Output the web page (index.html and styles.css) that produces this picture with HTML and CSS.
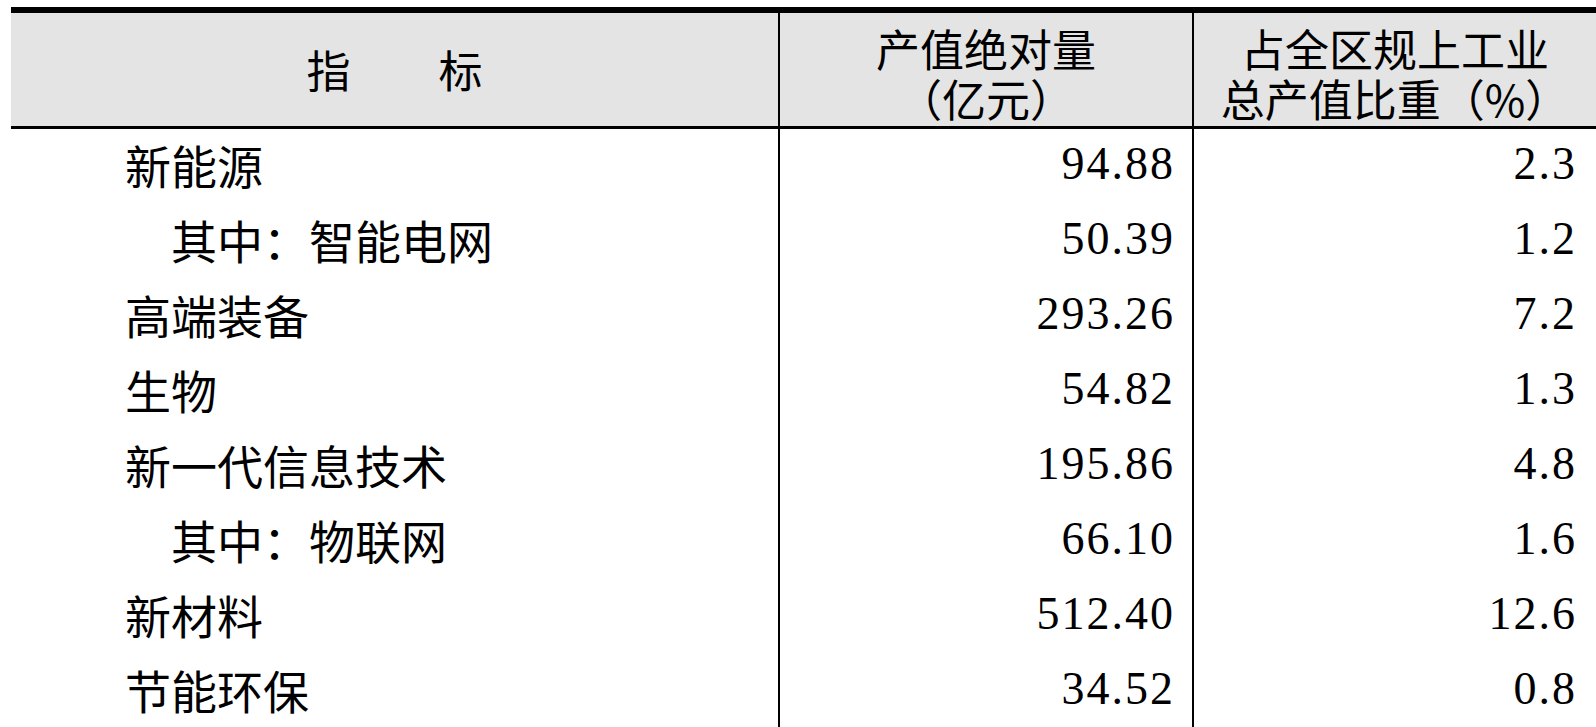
FILE: index.html
```html
<!DOCTYPE html>
<html lang="zh-CN">
<head>
<meta charset="utf-8">
<title>战略性新兴产业产值</title>
<link rel="stylesheet" href="styles.css">
</head>
<body>
<div class="sheet">
  <div class="row head">
    <div class="cell name-h"><span>指　　标</span></div>
    <div class="cell col-h"><span>产值绝对量</span><span>（亿元）</span></div>
    <div class="cell col-h"><span>占全区规上工业</span><span>总产值比重（%）</span></div>
  </div>
  <div class="row body">
    <div class="cell name">新能源</div>
    <div class="cell num">94.88</div>
    <div class="cell num">2.3</div>
  </div>
  <div class="row body">
    <div class="cell name sub">其中：智能电网</div>
    <div class="cell num">50.39</div>
    <div class="cell num">1.2</div>
  </div>
  <div class="row body">
    <div class="cell name">高端装备</div>
    <div class="cell num">293.26</div>
    <div class="cell num">7.2</div>
  </div>
  <div class="row body">
    <div class="cell name">生物</div>
    <div class="cell num">54.82</div>
    <div class="cell num">1.3</div>
  </div>
  <div class="row body">
    <div class="cell name">新一代信息技术</div>
    <div class="cell num">195.86</div>
    <div class="cell num">4.8</div>
  </div>
  <div class="row body">
    <div class="cell name sub">其中：物联网</div>
    <div class="cell num">66.10</div>
    <div class="cell num">1.6</div>
  </div>
  <div class="row body">
    <div class="cell name">新材料</div>
    <div class="cell num">512.40</div>
    <div class="cell num">12.6</div>
  </div>
  <div class="row body">
    <div class="cell name">节能环保</div>
    <div class="cell num">34.52</div>
    <div class="cell num">0.8</div>
  </div>
</div>
</body>
</html>
```

FILE: styles.css
```css
html, body {
  margin: 0;
  padding: 0;
  background: #ffffff;
}

body {
  overflow: hidden;
  font-family: "Noto Sans CJK SC", "Noto Sans", sans-serif;
  color: #000000;
}

.sheet {
  margin: 7px 0 0 11px;
  border-top: 6px solid #000000;
}

.row {
  display: grid;
  grid-template-columns: 767px 414px 1fr;
}

.cell {
  display: flex;
  align-items: center;
}

.cell + .cell {
  border-left: 2px solid #000000;
}

.head {
  height: 116px;
  background: #e4e4e4;
  border-bottom: 3px solid #000000;
  box-sizing: border-box;
  font-size: 44px;
  line-height: 50px;
}

.name-h {
  justify-content: center;
  padding-bottom: 2px;
}

.col-h {
  flex-direction: column;
  justify-content: flex-start;
  padding-top: 10px;
}

.body {
  height: 75px;
  font-size: 46px;
  line-height: 50px;
}

.body .cell {
  padding-bottom: 6px;
  box-sizing: border-box;
}

.name {
  padding-left: 114px;
}

.name.sub {
  padding-left: 160px;
}

.num {
  justify-content: flex-end;
  padding-right: 17px;
  font-family: "Liberation Serif", "Times New Roman", serif;
  letter-spacing: 2px;
}

.row .num:last-child {
  padding-right: 19px;
}
```
